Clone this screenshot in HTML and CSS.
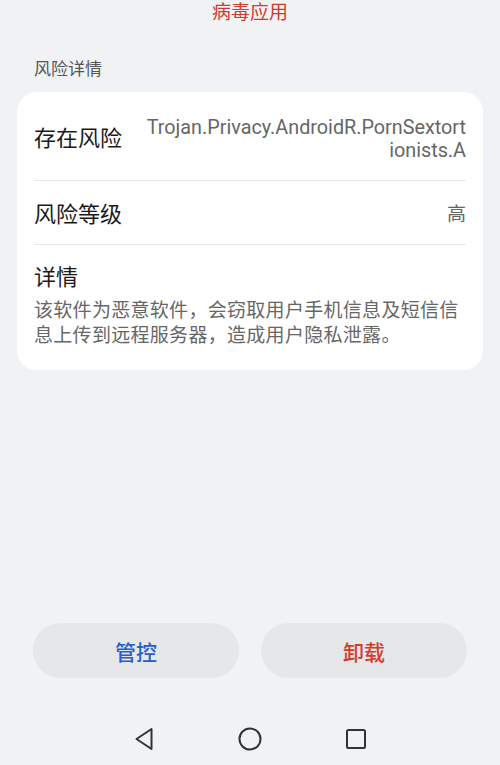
FILE: index.html
```html
<!DOCTYPE html>
<html lang="zh">
<head>
<meta charset="utf-8">
<link rel="stylesheet" href="styles.css">
</head>
<body>
<div class="screen">
  <div class="title">病毒应用</div>
  <div class="section-label">风险详情</div>
  <div class="card">
    <div class="row row-risk">
      <div class="row-label">存在风险</div>
      <div class="row-value">Trojan.Privacy.AndroidR.PornSextort<br>ionists.A</div>
    </div>
    <div class="divider"></div>
    <div class="row row-level">
      <div class="row-label">风险等级</div>
      <div class="row-value">高</div>
    </div>
    <div class="divider"></div>
    <div class="details">
      <div class="row-label">详情</div>
      <div class="details-text">该软件为恶意软件，会窃取用户手机信息及短信信息上传到远程服务器，造成用户隐私泄露。</div>
    </div>
  </div>
  <div class="spacer"></div>
  <div class="actions">
    <button class="btn btn-control">管控</button>
    <button class="btn btn-uninstall">卸载</button>
  </div>
  <div class="navbar">
    <svg class="nav-icon" viewBox="0 0 24 24" width="24" height="24"><path d="M19.5 2 L19.5 22 L4.5 12 Z" fill="none" stroke="#333" stroke-width="2" stroke-linejoin="round"/></svg>
    <svg class="nav-icon" viewBox="0 0 24 24" width="24" height="24"><circle cx="12" cy="12" r="10.5" fill="none" stroke="#333" stroke-width="2"/></svg>
    <svg class="nav-icon" viewBox="0 0 24 24" width="24" height="24"><rect x="3" y="3" width="18" height="18" rx="1.5" fill="none" stroke="#333" stroke-width="2"/></svg>
  </div>
</div>
</body>
</html>
```

FILE: styles.css
```css
html, body {
  margin: 0;
  padding: 0;
  background: #f1f2f4;
}
body {
  font-family: Roboto, "Noto Sans CJK SC", sans-serif;
  color: #1a1a1a;
}
.screen {
  width: 500px;
  height: 765px;
  display: flex;
  flex-direction: column;
}
.title {
  height: 26px;
  line-height: 26px;
  text-align: center;
  font-size: 19px;
  color: #d23a2c;
}
.section-label {
  margin-top: 30px;
  padding-left: 34px;
  height: 26px;
  line-height: 26px;
  font-size: 17px;
  color: #555;
}
.card {
  margin: 10px 17px 0;
  background: #fff;
  border-radius: 20px;
  padding: 0 17px;
}
.row {
  display: flex;
  align-items: center;
  justify-content: space-between;
  box-sizing: border-box;
}
.row-risk {
  height: 88px;
  padding-top: 6px;
}
.row-level {
  height: 63px;
  padding-top: 4px;
}
.row-label {
  font-size: 22px;
  line-height: 28px;
  color: #1a1a1a;
  flex-shrink: 0;
}
.row-value {
  text-align: right;
  font-size: 19.8px;
  line-height: 23px;
  color: #666;
}
.row-level .row-value {
  font-size: 19px;
}
.divider {
  height: 1px;
  background: #e6e6e6;
}
.details {
  padding: 19px 0 22px;
}
.details-text {
  margin-top: 6px;
  font-size: 19px;
  line-height: 25px;
  color: #666;
  letter-spacing: 0.3px;
}
.spacer {
  flex: 1;
}
.actions {
  display: flex;
  gap: 22px;
  padding: 0 33px;
}
.btn {
  flex: 1;
  height: 55px;
  border: none;
  border-radius: 28px;
  background: #e6e7e9;
  font-family: "Noto Sans CJK SC", sans-serif;
  font-size: 21px;
  font-weight: 500;
}
.btn-control {
  color: #1d5fd0;
}
.btn-uninstall {
  color: #d63a2c;
}
.navbar {
  height: 38px;
  padding-top: 49px;
  display: flex;
  align-items: flex-start;
  justify-content: center;
  gap: 82px;
}
.nav-icon {
  display: block;
}
```
